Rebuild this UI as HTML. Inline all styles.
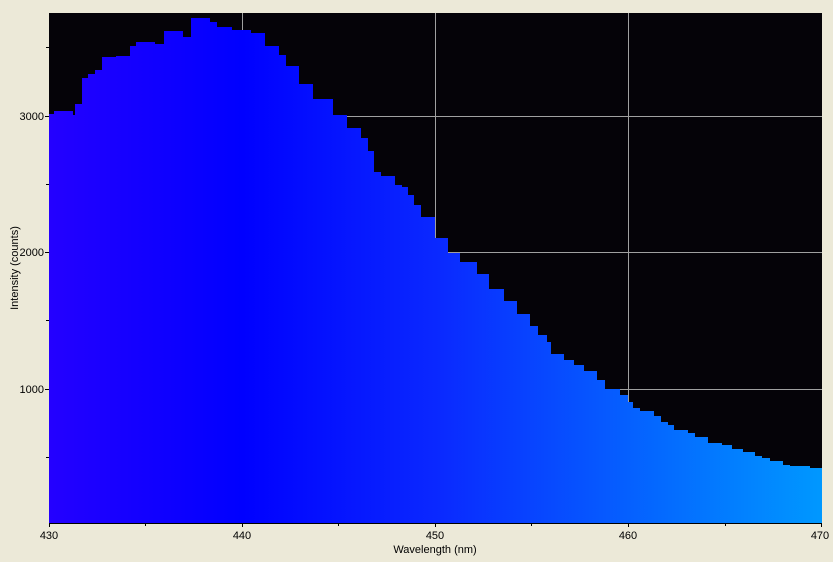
<!DOCTYPE html>
<html><head><meta charset="utf-8"><style>
html,body{margin:0;padding:0;background:#ECE9D8;}
svg{display:block;}
text{font-family:"Liberation Sans",sans-serif;font-size:11px;fill:#000;}
</style></head><body>
<svg width="833" height="562" viewBox="0 0 833 562" xmlns="http://www.w3.org/2000/svg">
<defs>
<linearGradient id="g" x1="49" y1="0" x2="822" y2="0" gradientUnits="userSpaceOnUse">
<stop offset="0" stop-color="#2400ff"/>
<stop offset="0.25" stop-color="#0000ff"/>
<stop offset="0.5" stop-color="#0a28ff"/>
<stop offset="0.75" stop-color="#0560ff"/>
<stop offset="1" stop-color="#0098ff"/>
</linearGradient>
</defs>
<rect x="49" y="13" width="773" height="510" fill="#050308"/>
<g stroke="#a0a0a0" stroke-width="1">
<line x1="242.5" y1="13" x2="242.5" y2="523"/>
<line x1="435.5" y1="13" x2="435.5" y2="523"/>
<line x1="628.5" y1="13" x2="628.5" y2="523"/>
<line x1="49" y1="116.5" x2="822" y2="116.5"/>
<line x1="49" y1="252.5" x2="822" y2="252.5"/>
<line x1="49" y1="389.5" x2="822" y2="389.5"/>
</g>
<path fill="url(#g)" d="M49,523 V114 H54 V111 H73 V115 H75 V104 H82 V78 H88 V74 H95 V70 H102 V57 H116 V56 H130 V46 H136 V42 H155 V44 H164 V31 H183 V37 H191 V18 H210 V22 H217 V27 H232 V30 H251 V33 H265 V46 H279 V55 H286 V66 H299 V84 H313 V99 H333 V115 H347 V128 H361 V138 H368 V151 H374 V172 H381 V176 H395 V185 H402 V187 H408 V195 H414 V205 H421 V217 H435 V238 H448 V253 H460 V262 H477 V274 H489 V289 H504 V301 H517 V314 H530 V326 H538 V335 H547 V342 H551 V354 H564 V360 H574 V365 H584 V371 H597 V380 H605 V389 H620 V395 H628 V402 H633 V408 H640 V411 H654 V416 H661 V422 H668 V425 H674 V430 H688 V433 H695 V437 H708 V443 H722 V445 H732 V449 H743 V452 H755 V456 H762 V458 H770 V461 H783 V465 H790 V466 H810 V468 H822 V523 Z"/>
<g stroke="#000" stroke-width="1">
<line x1="49" y1="523.5" x2="822" y2="523.5"/>
<line x1="49.5" y1="523" x2="49.5" y2="527"/>
<line x1="145.5" y1="523" x2="145.5" y2="526"/>
<line x1="242.5" y1="523" x2="242.5" y2="527"/>
<line x1="338.5" y1="523" x2="338.5" y2="526"/>
<line x1="435.5" y1="523" x2="435.5" y2="527"/>
<line x1="531.5" y1="523" x2="531.5" y2="526"/>
<line x1="628.5" y1="523" x2="628.5" y2="527"/>
<line x1="725.5" y1="523" x2="725.5" y2="526"/>
<line x1="821.5" y1="523" x2="821.5" y2="527"/>
<line x1="45" y1="116.5" x2="49" y2="116.5"/>
<line x1="46" y1="47.5" x2="49" y2="47.5"/>
<line x1="46" y1="184.5" x2="49" y2="184.5"/>
<line x1="45" y1="252.5" x2="49" y2="252.5"/>
<line x1="46" y1="320.5" x2="49" y2="320.5"/>
<line x1="45" y1="389.5" x2="49" y2="389.5"/>
<line x1="46" y1="457.5" x2="49" y2="457.5"/>
</g>
<text x="49" y="539" text-anchor="middle">430</text>
<text x="242" y="539" text-anchor="middle">440</text>
<text x="435" y="539" text-anchor="middle">450</text>
<text x="628" y="539" text-anchor="middle">460</text>
<text x="820" y="539" text-anchor="middle">470</text>
<text x="435" y="553" text-anchor="middle">Wavelength (nm)</text>
<text x="44" y="120" text-anchor="end">3000</text>
<text x="44" y="256" text-anchor="end">2000</text>
<text x="44" y="393" text-anchor="end">1000</text>
<text transform="translate(18,268) rotate(-90)" text-anchor="middle">Intensity (counts)</text>
</svg>
</body></html>
